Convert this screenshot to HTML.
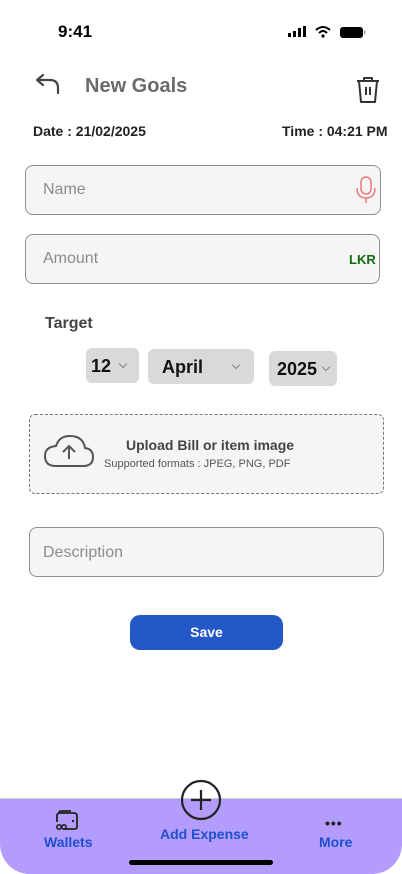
<!DOCTYPE html>
<html><head><meta charset="utf-8"><style>
*{box-sizing:border-box;margin:0;padding:0}
body{width:402px;height:874px;background:#fff;font-family:"Liberation Sans",sans-serif;position:relative;overflow:hidden}
.a{position:absolute}
.field{position:absolute;background:#f5f5f5;border:1px solid #8f8f8f;border-radius:8px}
.ph{position:absolute;color:#8c8c8c;font-size:16px}
.sel{position:absolute;background:#d9d9d9;border-radius:6px;font-size:18px;font-weight:bold;color:#111}
.chev{position:absolute;width:6px;height:6px;border-right:1.3px solid #888;border-bottom:1.3px solid #888;transform:rotate(45deg)}
</style></head><body>
<div class="a" style="left:58px;top:22px;font-size:17px;font-weight:bold;color:#000">9:41</div>
<svg class="a" style="left:288px;top:25px" width="80" height="14">
<rect x="0" y="8" width="3" height="4" fill="#000"/><rect x="5" y="6" width="3" height="6" fill="#000"/><rect x="10" y="3" width="3" height="9" fill="#000"/><rect x="15" y="1" width="3" height="11" fill="#000"/>
<path d="M28 5 Q35 -1 42 5" stroke="#000" stroke-width="2" fill="none"/><path d="M31 8 Q35 4 39 8" stroke="#000" stroke-width="2" fill="none"/><circle cx="35" cy="11" r="1.6" fill="#000"/>
<rect x="52" y="2" width="23" height="11" rx="3" fill="#000"/><rect x="76" y="5.5" width="1.5" height="4" fill="#999"/>
</svg>
<svg class="a" style="left:34px;top:73px" width="28" height="22"><path d="M4 7 H16 Q24 7 24 15 V20 M9 2 L3 7 L9 12" stroke="#444" stroke-width="2.2" fill="none" stroke-linecap="round" stroke-linejoin="round"/></svg>
<div class="a" style="left:85px;top:75px;font-size:20px;font-weight:bold;color:#6b6b6b">New Goals</div>
<svg class="a" style="left:354px;top:75px" width="28" height="30"><path d="M3 6 H25 M10 6 V3 H18 V6 M5 6 L7 27 H21 L23 6 M12 12 V20 M16 12 V20" stroke="#333" stroke-width="2" fill="none" stroke-linejoin="round"/></svg>
<div class="a" style="left:33px;top:123px;font-size:14px;font-weight:bold;color:#222">Date : 21/02/2025</div>
<div class="a" style="left:282px;top:123px;font-size:14px;font-weight:bold;color:#222">Time : 04:21 PM</div>
<div class="field" style="left:25px;top:165px;width:356px;height:50px"></div>
<div class="ph" style="left:43px;top:181px">Name</div>
<svg class="a" style="left:355px;top:175px" width="22" height="30"><rect x="6" y="2" width="10" height="17" rx="5" stroke="#e66" stroke-width="1.3" fill="none"/><path d="M2 13 Q2 23 11 23 Q20 23 20 13 M11 23 V28" stroke="#e66" stroke-width="1.3" fill="none"/></svg>
<div class="field" style="left:25px;top:234px;width:355px;height:50px"></div>
<div class="ph" style="left:43px;top:250px">Amount</div>
<div class="a" style="left:349px;top:252px;font-size:13px;font-weight:bold;color:#0d6b0d">LKR</div>
<div class="a" style="left:45px;top:315px;font-size:16px;font-weight:bold;color:#444">Target</div>
<div class="sel" style="left:86px;top:348px;width:53px;height:35px"><span class="a" style="left:5px;top:8px">12</span><span class="chev" style="left:34px;top:13px"></span></div>
<div class="sel" style="left:148px;top:349px;width:106px;height:35px"><span class="a" style="left:14px;top:8px">April</span><span class="chev" style="left:85px;top:13px"></span></div>
<div class="sel" style="left:269px;top:351px;width:68px;height:35px"><span class="a" style="left:8px;top:8px">2025</span><span class="chev" style="left:54px;top:13px"></span></div>
<div class="a" style="left:29px;top:414px;width:355px;height:80px;border:1px dashed #777;border-radius:6px;background:#f5f5f5"></div>
<svg class="a" style="left:43px;top:434px" width="52" height="34"><path d="M13 32 H40 Q50 32 50 23 Q50 15 42 14 Q40 2 27 2 Q16 2 13 12 Q2 13 2 22 Q2 32 13 32 Z" stroke="#555" stroke-width="2" fill="none"/><path d="M26 25 V12 M20 18 L26 12 L32 18" stroke="#555" stroke-width="2" fill="none"/></svg>
<div class="a" style="left:126px;top:437px;font-size:14px;font-weight:bold;color:#444">Upload Bill or item image</div>
<div class="a" style="left:104px;top:458px;font-size:11px;color:#555">Supported formats : JPEG, PNG, PDF</div>
<div class="field" style="left:29px;top:527px;width:355px;height:50px"></div>
<div class="ph" style="left:43px;top:544px">Description</div>
<div class="a" style="left:130px;top:615px;width:153px;height:35px;background:#2458c6;border-radius:10px;color:#fff;font-size:14px;font-weight:bold;text-align:center;line-height:35px">Save</div>
<div class="a" style="left:0;top:798px;width:402px;height:76px;background:#b39cfc;border-radius:0 0 30px 30px;border-top:1px solid #ccc"></div>
<svg class="a" style="left:180px;top:779px" width="42" height="42"><circle cx="21" cy="21" r="19" stroke="#222" stroke-width="2.2" fill="none"/><path d="M21 11 V31 M11 21 H31" stroke="#222" stroke-width="2.2"/></svg>
<div class="a" style="left:160px;top:826px;font-size:14px;font-weight:bold;color:#1f4fd1">Add Expense</div>
<svg class="a" style="left:54px;top:810px" width="26" height="22"><path d="M3 6 Q3 3 6 3 H20 Q23 3 23 6 V17 Q23 19 20 19 H10 M3 6 V12 M6 3 Q4 1 8 1 H17" stroke="#222" stroke-width="1.8" fill="none"/><circle cx="19" cy="11" r="1.2" fill="#222"/><circle cx="5" cy="17" r="2.2" stroke="#222" stroke-width="1.6" fill="none"/><circle cx="10" cy="17" r="2.2" stroke="#222" stroke-width="1.6" fill="none"/></svg>
<div class="a" style="left:44px;top:834px;font-size:14px;font-weight:bold;color:#1f4fd1">Wallets</div>
<div class="a" style="left:325px;top:815px;font-size:14px;font-weight:bold;color:#222;letter-spacing:1px">•••</div>
<div class="a" style="left:319px;top:834px;font-size:14px;font-weight:bold;color:#1f4fd1">More</div>
<div class="a" style="left:129px;top:860px;width:144px;height:5px;background:#000;border-radius:3px"></div>
</body></html>
